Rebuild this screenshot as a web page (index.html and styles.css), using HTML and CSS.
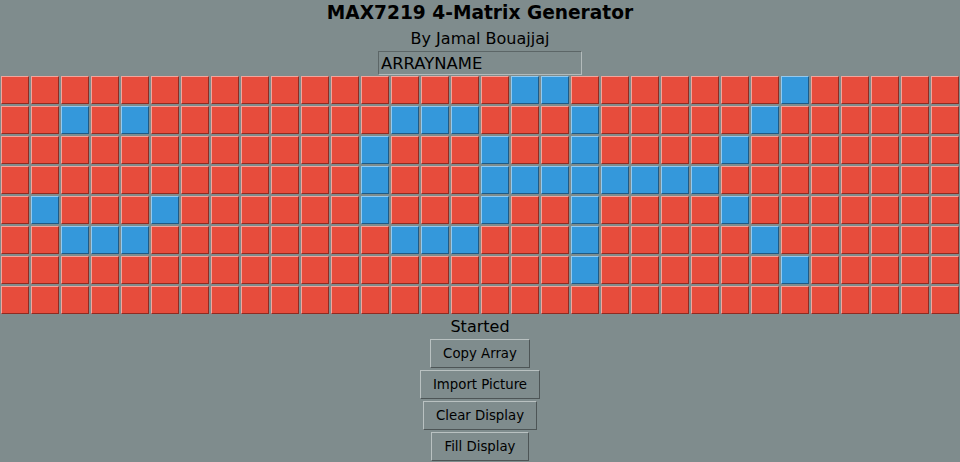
FILE: index.html
```html
<!DOCTYPE html>
<html lang="en">
<head>
  <meta charset="UTF-8">
  <title>MAX7219 4-Matrix Generator</title>
  <meta name="viewport" content="width=device-width, initial-scale=1.0">
  <link rel="stylesheet" href="styles.css">
</head>
<body>
  <h1 class="title">MAX7219 4-Matrix Generator</h1>
  <div class="author">By Jamal Bouajjaj</div>
  <input type="text" id="arrayName" class="name-input" value="ARRAYNAME">

  <div id="matrix" class="matrix"></div>

  <div id="status" class="status">Started</div>
  <button class="btn" onclick="copyArray()">Copy Array</button>
  <button class="btn" onclick="importPicture()">Import Picture</button>
  <button class="btn" onclick="clearDisplay()">Clear Display</button>
  <button class="btn" onclick="fillDisplay()">Fill Display</button>

  <script src="script.js"></script>
</body>
</html>
```

FILE: styles.css
```css
body {
  font-family: "DejaVu Sans", Verdana, sans-serif;
  margin: 0;
  padding: 0;
  display: flex;
  flex-direction: column;
  align-items: center;
  min-height: 100vh;
  background-color: #7f8c8d;
  color: #000;
}

.title {
  margin: 0;
  font-size: 18.6px;
  font-weight: bold;
  line-height: 26px;
}

.author {
  font-size: 16px;
  line-height: 25px;
}

.name-input {
  width: 204px;
  height: 24px;
  box-sizing: border-box;
  padding: 0 2px;
  margin: 0;
  font-family: inherit;
  font-size: 16.4px;
  background-color: #7f8c8d;
  color: #000;
  border: 1px solid;
  border-color: #5c6667 #b3bbbb #b3bbbb #5c6667;
  outline: none;
}

.matrix {
  display: grid;
  grid-template-columns: repeat(32, 30px);
  grid-auto-rows: 30px;
  width: 960px;
}

.cell {
  margin: 1px;
  box-sizing: border-box;
  border: 1px solid;
  background-color: #e74c3c;
  border-color: #f3a49b #902b21 #902b21 #f3a49b;
  cursor: pointer;
}

.cell.on {
  background-color: #3498db;
  border-color: #93c9ef #1f5a85 #1f5a85 #93c9ef;
}

.status {
  font-size: 16px;
  line-height: 22px;
  padding-top: 1px;
}

.btn {
  font-family: inherit;
  font-size: 13.3px;
  height: 29px;
  padding: 0 12px;
  margin: 1px 0 1px;
  background-color: #7f8c8d;
  color: #000;
  border: 1px solid;
  border-color: #b9c1c1 #4d5556 #4d5556 #b9c1c1;
  cursor: pointer;
}
```

FILE: script.js
```js
var pattern = [
  '.................##.......#.....',
  '..#.#........###...#.....#......',
  '............#...#..#....#.......',
  '............#...########........',
  '.#...#......#...#..#....#.......',
  '..###........###...#.....#......',
  '...................#......#.....',
  '................................'
];

var matrix = document.getElementById('matrix');

function buildMatrix() {
  for (var r = 0; r < 8; r++) {
    for (var c = 0; c < 32; c++) {
      var cell = document.createElement('div');
      cell.className = 'cell';
      if (pattern[r].charAt(c) === '#') {
        cell.classList.add('on');
      }
      cell.onclick = function () {
        this.classList.toggle('on');
      };
      matrix.appendChild(cell);
    }
  }
}

function setStatus(text) {
  document.getElementById('status').innerText = text;
}

function copyArray() {
  var cells = matrix.children;
  var out = [];
  // one byte per column, 4 matrices of 8 columns
  for (var c = 0; c < 32; c++) {
    var b = 0;
    for (var r = 0; r < 8; r++) {
      if (cells[r * 32 + c].classList.contains('on')) b |= (1 << r);
    }
    out.push('0x' + (b < 16 ? '0' : '') + b.toString(16));
  }
  var name = document.getElementById('arrayName').value;
  var text = 'const byte ' + name + '[] = {' + out.join(',') + '};';
  if (navigator.clipboard) navigator.clipboard.writeText(text);
  setStatus('Copied');
}

function importPicture() {
  setStatus('Started');
}

function clearDisplay() {
  var cells = matrix.children;
  for (var i = 0; i < cells.length; i++) cells[i].classList.remove('on');
  setStatus('Cleared');
}

function fillDisplay() {
  var cells = matrix.children;
  for (var i = 0; i < cells.length; i++) cells[i].classList.add('on');
  setStatus('Filled');
}

buildMatrix();
```
